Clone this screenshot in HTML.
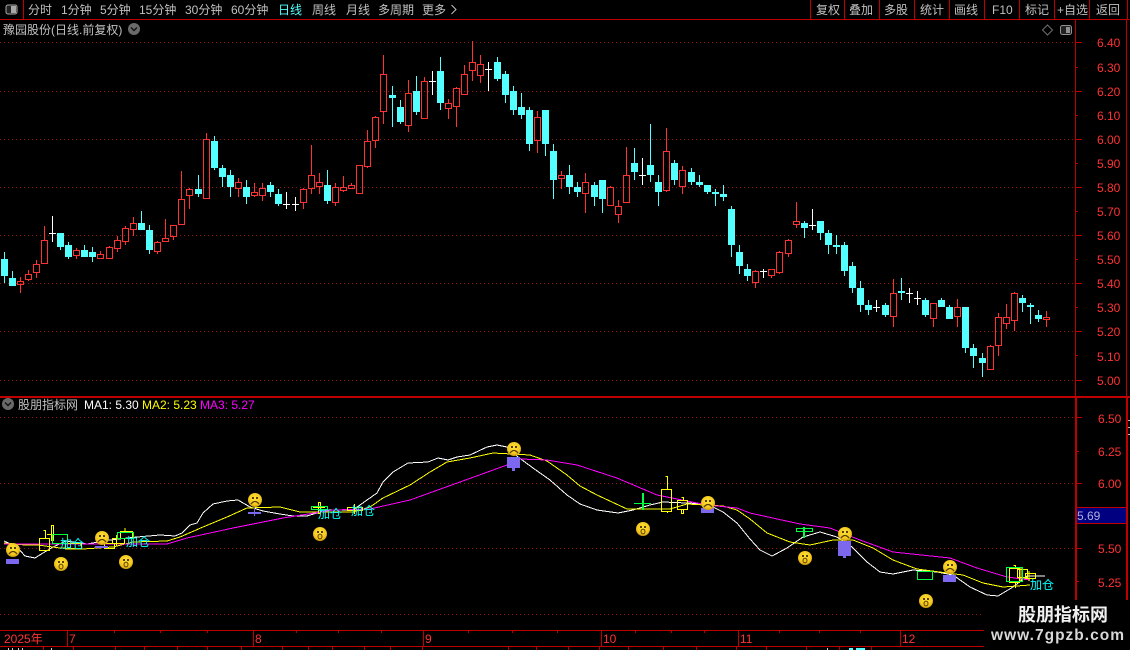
<!DOCTYPE html>
<html><head><meta charset="utf-8"><style>
html,body{margin:0;padding:0;background:#000;width:1130px;height:650px;overflow:hidden}
svg{display:block}
text{font-family:"Liberation Sans","WenQuanYi Zen Hei","Noto Sans CJK SC",sans-serif;font-size:12px}
.g{fill:#c0c0c0}.r{fill:#ff3232}.c{fill:#00ffff;font-size:12px}
</style></head><body>
<svg width="1130" height="650" viewBox="0 0 1130 650" xmlns="http://www.w3.org/2000/svg">
<defs>
<radialGradient id="y" cx="50%" cy="40%" r="60%"><stop offset="0" stop-color="#ffe53a"/><stop offset=".7" stop-color="#f5c81e"/><stop offset="1" stop-color="#c99a10"/></radialGradient>
<g id="fr"><circle r="7" fill="url(#y)"/><rect x="-3" y="-3" width="2" height="2" fill="#5a3d00"/><rect x="1" y="-3" width="2" height="2" fill="#5a3d00"/><path d="M-4 4Q0 -1 4 4" fill="none" stroke="#5a3d00" stroke-width="1.2"/></g>
<g id="su"><circle r="7" fill="url(#y)"/><rect x="-3" y="-3" width="2" height="2" fill="#5a3d00"/><rect x="1" y="-3" width="2" height="2" fill="#5a3d00"/><ellipse cy="2.5" rx="2" ry="2.4" fill="#f5c81e" stroke="#5a3d00"/></g>
</defs>
<rect width="1130" height="650" fill="#000"/>

<!-- grid -->
<path shape-rendering="crispEdges" stroke="#8f1010" stroke-dasharray="1 3" fill="none" d="M0 42.5H1075M0 91.5H1075M0 139.5H1075M0 187.5H1075M0 235.5H1075M0 283.5H1075M0 331.5H1075M0 380.5H1075M0 417.5H1075M0 483.5H1075M0 548.5H1075M0 614.5H984"/>

<!-- frame -->
<g shape-rendering="crispEdges" fill="#c00000">
<rect x="0" y="19" width="1130" height="1"/>
<rect x="23" y="0" width="1" height="19"/>
<rect x="810" y="0" width="1" height="19"/><rect x="844" y="0" width="1" height="19"/><rect x="879" y="0" width="1" height="19"/><rect x="914" y="0" width="1" height="19"/><rect x="949" y="0" width="1" height="19"/><rect x="984" y="0" width="1" height="19"/><rect x="1019" y="0" width="1" height="19"/><rect x="1054" y="0" width="1" height="19"/><rect x="1089" y="0" width="1" height="19"/>
<rect x="1127" y="0" width="1" height="19"/>
<rect x="1075" y="20" width="1" height="376"/>
<rect x="1126" y="20" width="1" height="376"/>
<rect x="0" y="396" width="1130" height="2"/>
<rect x="1075" y="398" width="2" height="202"/>
<rect x="1126" y="398" width="2" height="202"/>
<rect x="1077" y="507" width="49" height="1"/><rect x="1077" y="523" width="49" height="1"/>
<rect x="0" y="630" width="984" height="1"/>
<rect x="0" y="646" width="984" height="1"/>
<rect x="67" y="631" width="1" height="15"/><rect x="253" y="631" width="1" height="15"/><rect x="423" y="631" width="1" height="15"/><rect x="601" y="631" width="1" height="15"/><rect x="738" y="631" width="1" height="15"/><rect x="900" y="631" width="1" height="15"/>
</g>
<path shape-rendering="crispEdges" stroke="#c00000" fill="none" d="M1076 42.5H1082M1076 91.5H1082M1076 139.5H1082M1076 187.5H1082M1076 235.5H1082M1076 283.5H1082M1076 331.5H1082M1076 380.5H1082M1076 67.5H1078M1076 115.5H1078M1076 163.5H1078M1076 211.5H1078M1076 259.5H1078M1076 307.5H1078M1076 355.5H1078M1077 417.5H1082M1077 483.5H1082M1077 548.5H1082M1077 451.5H1079M1077 516.5H1079M1077 581.5H1079
M114.5 631V633M160.5 631V633M207.5 631V633M296.5 631V633M338.5 631V633M381.5 631V633M468.5 631V633M512.5 631V633M557.5 631V633M635.5 631V633M671.5 631V633M704.5 631V633M779.5 631V633M819.5 631V633M860.5 631V633M43.5 647V650M73.5 647V650M115.5 647V650M144.5 647V650M177.5 647V650M207.5 647V650M241.5 647V650M282.5 647V650M308.5 647V650M332.5 647V650M364.5 647V650M390.5 647V650M422.5 647V650M508.5 647V650M536.5 647V650M568.5 647V650M599.5 647V650M628.5 647V650M663.5 647V650M696.5 647V650M736.5 647V650M766.5 647V650M806.5 647V650M839.5 647V650M871.5 647V650"/>
<path shape-rendering="crispEdges" stroke="#c0c0c0" fill="none" d="M1128 420.5H1130M1128 427.5H1130M1128 434.5H1130"/>
<rect x="1077" y="508" width="49" height="15" fill="#000080"/>

<!-- top bar -->
<rect x="6" y="5" width="11" height="9" rx="2" fill="#222" stroke="#a8a8a8"/><rect x="11" y="6" width="5" height="7" fill="#a8a8a8"/>
<text x="28" y="14" class="g">分时</text><text x="61" y="14" class="g">1分钟</text><text x="100" y="14" class="g">5分钟</text><text x="139" y="14" class="g">15分钟</text><text x="185" y="14" class="g">30分钟</text><text x="231" y="14" class="g">60分钟</text>
<text x="278" y="14" fill="#54ffff">日线</text>
<text x="312" y="14" class="g">周线</text><text x="346" y="14" class="g">月线</text><text x="378" y="14" class="g">多周期</text><text x="422" y="14" class="g">更多</text>
<path d="M451.5 5L456 9.5L451.5 14" fill="none" stroke="#c0c0c0"/>
<text x="816" y="14" class="g">复权</text><text x="849" y="14" class="g">叠加</text><text x="884" y="14" class="g">多股</text><text x="920" y="14" class="g">统计</text><text x="954" y="14" class="g">画线</text><text x="992" y="14" class="g">F10</text><text x="1025" y="14" class="g">标记</text><text x="1057" y="14" class="g">+自选</text><text x="1096" y="14" class="g">返回</text>

<!-- title row -->
<text x="3" y="34" class="g">豫园股份(日线.前复权)</text>
<circle cx="134" cy="29" r="6" fill="#6a6a6a"/><path d="M131 27.5L134 30.5L137 27.5" fill="none" stroke="#111" stroke-width="1.4"/>
<path d="M1047.5 25L1052.5 30L1047.5 35L1042.5 30Z" fill="none" stroke="#707070"/>
<rect x="1060.5" y="25.5" width="11" height="9" rx="2" fill="#222" stroke="#909090"/><rect x="1066" y="27" width="4" height="6" fill="#909090"/>

<!-- price labels -->
<text x="1097" y="47" class="r">6.40</text><text x="1097" y="72" class="r">6.30</text><text x="1097" y="96" class="r">6.20</text><text x="1097" y="120" class="r">6.10</text><text x="1097" y="144" class="r">6.00</text><text x="1097" y="168" class="r">5.90</text><text x="1097" y="192" class="r">5.80</text><text x="1097" y="216" class="r">5.70</text><text x="1097" y="240" class="r">5.60</text><text x="1097" y="264" class="r">5.50</text><text x="1097" y="288" class="r">5.40</text><text x="1097" y="312" class="r">5.30</text><text x="1097" y="336" class="r">5.20</text><text x="1097" y="361" class="r">5.10</text><text x="1097" y="385" class="r">5.00</text>
<text x="1098" y="423" class="r">6.50</text><text x="1098" y="456" class="r">6.25</text><text x="1098" y="488" class="r">6.00</text><text x="1098" y="553" class="r">5.50</text><text x="1098" y="587" class="r">5.25</text>
<text x="1077" y="520" fill="#b0b0d8">5.69</text>

<!-- candles: cyan -->
<path shape-rendering="crispEdges" fill="none" stroke="#54ffff" d="M4.5 252V283M12.5 271V286M60.5 233V250M68.5 242V259M84.5 245V257M92.5 247V262M141.5 211V230M149.5 225V254M198.5 175V197M214.5 136V170M222.5 165V187M230.5 170V197M246.5 180V204M270.5 182V197M278.5 189V206M327.5 170V204M392.5 86V127M400.5 100V124M416.5 76V115M440.5 57V110M497.5 57V81M505.5 71V103M513.5 86V115M521.5 93V119M529.5 107V151M545.5 110V156M553.5 144V199M569.5 165V194M577.5 182V197M594.5 182V206M602.5 180V213M634.5 148V180M650.5 124V182M658.5 175V206M674.5 160V185M691.5 168V185M699.5 175V187M707.5 185V194M715.5 189V206M723.5 185V201M731.5 206V257M739.5 245V274M747.5 264V281M804.5 221V238M820.5 221V240M828.5 230V254M836.5 235V254M844.5 242V276M852.5 262V293M860.5 281V312M868.5 300V315M885.5 303V317M901.5 278V300M925.5 298V317M941.5 298V307M949.5 305V319M965.5 307V353M973.5 344V368M982.5 353V377M1022.5 295V312M1030.5 303V324M1038.5 310V322"/>
<path shape-rendering="crispEdges" fill="#54ffff" d="M1 259h7V276h-7zM9 278h7V286h-7zM57 233h7V247h-7zM65 245h7V257h-7zM81 250h7V257h-7zM89 252h7V257h-7zM138 223h7V230h-7zM146 230h7V250h-7zM195 189h7V194h-7zM211 141h7V168h-7zM219 168h7V177h-7zM227 175h7V187h-7zM243 187h7V197h-7zM267 185h7V192h-7zM275 194h7V204h-7zM324 185h7V201h-7zM389 95h7V98h-7zM397 107h7V122h-7zM413 91h7V112h-7zM437 71h7V103h-7zM494 62h7V79h-7zM502 74h7V95h-7zM510 91h7V110h-7zM518 107h7V115h-7zM526 110h7V144h-7zM542 110h7V144h-7zM550 151h7V180h-7zM566 175h7V187h-7zM574 187h7V192h-7zM591 185h7V197h-7zM599 180h7V199h-7zM631 163h7V172h-7zM647 165h7V175h-7zM655 182h7V192h-7zM671 163h7V180h-7zM688 172h7V182h-7zM696 182h7V185h-7zM704 185h7V192h-7zM712 192h7V194h-7zM720 194h7V197h-7zM728 209h7V245h-7zM736 252h7V266h-7zM744 269h7V276h-7zM801 223h7V228h-7zM817 221h7V233h-7zM825 233h7V245h-7zM833 245h7V247h-7zM841 245h7V271h-7zM849 266h7V288h-7zM857 288h7V305h-7zM865 305h7V310h-7zM882 305h7V315h-7zM898 291h7V293h-7zM922 300h7V315h-7zM938 300h7V307h-7zM946 307h7V319h-7zM962 307h7V348h-7zM970 348h7V356h-7zM979 358h7V363h-7zM1019 298h7V303h-7zM1027 305h7V307h-7zM1035 315h7V319h-7z"/>
<!-- candles: white -->
<path shape-rendering="crispEdges" fill="none" stroke="#fff" d="M52.5 216V242M49 233.5H56M286.5 192V209M283 204.5H290M295.5 197V211M292 204.5H299M432.5 71V95M429 81.5H436M488.5 62V91M485 69.5H492M642.5 158V185M639 175.5H646M763.5 269V278M760 271.5H767M812.5 209V230M809 225.5H816M876.5 300V312M873 307.5H880M909.5 288V303M906 293.5H913M917.5 291V305M914 298.5H921"/>
<!-- candles: red -->
<path shape-rendering="crispEdges" fill="none" stroke="#ff3232" d="M20.5 277V281M20.5 284V293M17.5 281.5h6V284.5h-6z
M28.5 270V274M28.5 279V281M25.5 274.5h6V279.5h-6z
M36.5 260V264M36.5 272V278M33.5 264.5h6V272.5h-6z
M44.5 226V240M41.5 240.5h6V263.5h-6z
M76.5 248V250M76.5 255V259M73.5 250.5h6V255.5h-6z
M100.5 251V254M100.5 258V259M97.5 254.5h6V258.5h-6z
M109.5 246V247M106.5 247.5h6V258.5h-6z
M117.5 236V240M117.5 248V252M114.5 240.5h6V248.5h-6z
M125.5 226V228M125.5 241V245M122.5 228.5h6V241.5h-6z
M133.5 217V223M133.5 229V236M130.5 223.5h6V229.5h-6z
M157.5 241V242M157.5 251V254M154.5 242.5h6V251.5h-6z
M165.5 219V238M165.5 241V242M162.5 238.5h6V241.5h-6z
M173.5 236V240M170.5 225.5h6V236.5h-6z
M181.5 171V199M181.5 224V225M178.5 199.5h6V224.5h-6z
M189.5 188V189M189.5 195V209M186.5 189.5h6V195.5h-6z
M206.5 133V139M203.5 139.5h6V198.5h-6z
M238.5 178V182M238.5 188V197M235.5 182.5h6V188.5h-6z
M254.5 183V192M254.5 195V197M251.5 192.5h6V195.5h-6z
M262.5 183V188M262.5 195V201M259.5 188.5h6V195.5h-6z
M303.5 188V189M303.5 202V209M300.5 189.5h6V202.5h-6z
M311.5 145V175M311.5 188V194M308.5 175.5h6V188.5h-6z
M319.5 173V182M319.5 186V194M316.5 182.5h6V186.5h-6z
M335.5 183V187M335.5 202V206M332.5 187.5h6V202.5h-6z
M343.5 176V187M343.5 190V192M340.5 187.5h6V190.5h-6z
M351.5 183V185M351.5 188V189M348.5 185.5h6V188.5h-6z
M356.5 165.5h6V193.5h-6z
M367.5 130V141M367.5 166V168M364.5 141.5h6V166.5h-6z
M375.5 116V117M375.5 140V148M372.5 117.5h6V140.5h-6z
M383.5 55V74M383.5 111V124M380.5 74.5h6V111.5h-6z
M408.5 80V93M408.5 125V132M405.5 93.5h6V125.5h-6z
M424.5 77V81M424.5 118V119M421.5 81.5h6V118.5h-6z
M448.5 99V103M448.5 108V119M445.5 103.5h6V108.5h-6z
M456.5 87V88M456.5 106V127M453.5 88.5h6V106.5h-6z
M464.5 65V74M461.5 74.5h6V94.5h-6z
M472.5 41V62M472.5 70V81M469.5 62.5h6V70.5h-6z
M480.5 55V64M480.5 75V83M477.5 64.5h6V75.5h-6z
M537.5 111V117M537.5 140V153M534.5 117.5h6V140.5h-6z
M561.5 171V175M561.5 178V189M558.5 175.5h6V178.5h-6z
M585.5 173V182M585.5 193V213M582.5 182.5h6V193.5h-6z
M610.5 186V187M607.5 187.5h6V205.5h-6z
M618.5 200V206M618.5 214V223M615.5 206.5h6V214.5h-6z
M626.5 147V175M623.5 175.5h6V202.5h-6z
M666.5 128V151M666.5 190V192M663.5 151.5h6V190.5h-6z
M682.5 166V170M682.5 186V194M679.5 170.5h6V186.5h-6z
M755.5 270V271M755.5 282V288M752.5 271.5h6V282.5h-6z
M771.5 275V278M768.5 269.5h6V275.5h-6z
M779.5 251V252M779.5 272V274M776.5 252.5h6V272.5h-6z
M788.5 239V240M788.5 253V257M785.5 240.5h6V253.5h-6z
M796.5 202V221M796.5 224V228M793.5 221.5h6V224.5h-6z
M893.5 279V293M893.5 316V327M890.5 293.5h6V316.5h-6z
M933.5 318V327M930.5 303.5h6V318.5h-6z
M957.5 299V307M957.5 316V327M954.5 307.5h6V316.5h-6z
M990.5 345V346M987.5 346.5h6V369.5h-6z
M998.5 313V317M998.5 345V356M995.5 317.5h6V345.5h-6z
M1006.5 304V317M1006.5 323V329M1003.5 317.5h6V323.5h-6z
M1014.5 292V293M1014.5 320V331M1011.5 293.5h6V320.5h-6z
M1046.5 311V317M1046.5 319V327M1043.5 317.5h6V319.5h-6z"/>

<!-- lower header -->
<circle cx="8" cy="404" r="6" fill="#6a6a6a"/><path d="M5 402.5L8 405.5L11 402.5" fill="none" stroke="#111" stroke-width="1.4"/>
<text x="18" y="409" class="g">股朋指标网</text>
<text x="84" y="409" fill="#fff">MA1: 5.30</text>
<text x="142" y="409" fill="#ffff00">MA2: 5.23</text>
<text x="200" y="409" fill="#ff00ff">MA3: 5.27</text>

<!-- MA lines -->
<g fill="none" stroke-width="1" shape-rendering="crispEdges">
<polyline stroke="#fff" points="4,541 17,547 25,556 35,558 43,553 53,547 66,541 87,544 110,540 137,537 160,535 175,536 182,533 190,525 197,523 203,513 213,504 227,501 238,500 250,507 263,511 280,514 293,516 307,516 327,510 353,510 367,500 377,493 383,482 393,472 408,463 428,462 438,458 448,460 457,457 470,455 487,447 497,445 507,447 518,457 533,468 550,480 567,495 580,504 597,510 618,513 633,510 650,505 663,502 687,503 707,504 723,512 737,523 750,539 760,550 772,556 787,548 803,537 820,532 837,537 852,547 867,562 880,572 893,574 913,570 937,572 953,575 970,587 987,595 998,596 1013,587 1027,576 1045,576"/>
<polyline stroke="#ffff00" points="4,543 25,545 38,545 60,548 83,549 113,547 133,542 167,541 180,537 203,527 227,517 247,508 280,507 300,512 353,512 370,507 383,498 410,485 430,472 447,462 470,458 493,453 530,455 547,461 567,475 580,486 597,495 627,509 670,509 687,504 723,506 737,510 750,519 767,533 790,542 810,545 833,540 853,540 873,548 893,560 917,569 947,573 963,575 983,583 1003,587 1030,585"/>
<polyline stroke="#ff00ff" points="4,544 60,544 167,544 187,538 233,528 283,518 333,510 370,509 410,500 460,482 507,465 520,459 547,460 577,465 617,478 657,495 707,505 737,508 750,513 800,524 830,528 860,540 893,552 950,558 977,568 1007,577 1030,580"/>
</g>

<!-- indicator candles -->
<g shape-rendering="crispEdges" fill="none">
<path stroke="#ffff00" d="M39.5 538.5h10V550.5h-10zM43.5 530.5h2V538M51.5 525.5h2V540.5h-2zM47 534.5H66M65.5 543.5h16V549h-16zM104.5 543.5h10V548.5h-10zM112.5 538.5h12V543.5h-12zM116.5 535V546M120.5 531.5h12V538.5h-12zM125 528V531M318.5 502.5h2V513.5h-2zM313 507.5H325M347.5 507.5h15V510.5h-15zM354.5 504V514M661.5 489.5h10V511.5h-10zM665.5 476.5h2V489M665.5 511.5h2V513M677.5 500.5h10V509.5h-10zM681.5 497.5h2V500M681.5 509.5h2V513.5h-2zM1009.5 568.5h10V582.5h-10zM1013.5 565.5h2V568M1013.5 582.5h2V588M1017.5 569.5h10V577.5h-10zM1021 568V582M1025.5 573.5h10V578.5h-10zM1029 571V581"/>
<path stroke="#00ff40" d="M52.5 534.5h15V543.5h-15zM117.5 532.5h16V538.5h-16zM311.5 506.5h16V509.5h-16zM642.5 493.5h1V509.5h-1zM634 503.5H651M796.5 528.5h16V531.5h-16zM803.5 527.5h1V537.5h-1zM917.5 571.5h15V579.5h-15zM1006.5 567.5h16V581.5h-16z"/>
</g>
<text x="60" y="548" class="c">加仓</text><text x="126" y="546" class="c">加仓</text><text x="318" y="518" class="c">加仓</text><text x="351" y="515" class="c">加仓</text><text x="1030" y="589" class="c">加仓</text>

<!-- purple boxes -->
<g fill="#7b68ee" shape-rendering="crispEdges">
<rect x="6" y="559" width="13" height="5"/>
<rect x="95" y="546" width="13" height="2"/>
<rect x="248" y="512" width="13" height="2"/><rect x="254" y="508" width="1" height="8"/>
<rect x="507" y="457" width="13" height="11"/><rect x="512" y="468" width="3" height="3"/>
<rect x="701" y="508" width="13" height="5"/>
<rect x="838" y="541" width="13" height="15"/><rect x="843" y="556" width="3" height="2"/>
<rect x="943" y="575" width="13" height="7"/>
</g>

<!-- emoji -->
<use href="#fr" x="13" y="550"/><use href="#fr" x="102" y="538"/><use href="#fr" x="255" y="500"/><use href="#fr" x="514" y="449"/><use href="#fr" x="708" y="503"/><use href="#fr" x="845" y="534"/><use href="#fr" x="950" y="567"/>
<use href="#su" x="61" y="564"/><use href="#su" x="126" y="562"/><use href="#su" x="320" y="534"/><use href="#su" x="643" y="529"/><use href="#su" x="805" y="558"/><use href="#su" x="926" y="601"/>

<!-- time axis -->
<text x="4" y="643" class="r">2025年</text>
<text x="69" y="643" class="r">7</text><text x="255" y="643" class="r">8</text><text x="425" y="643" class="r">9</text><text x="603" y="643" class="r">10</text><text x="740" y="643" class="r">11</text><text x="902" y="643" class="r">12</text>

<!-- bottom strip hints -->
<path shape-rendering="crispEdges" stroke="#d0d0d0" d="M8.5 648V650M12.5 648V650M18.5 648V650M22.5 648V650M51.5 648V650M827.5 648V650"/>
<rect x="849" y="648" width="4" height="2" fill="#54ffff"/><rect x="856" y="648" width="9" height="2" fill="#54ffff"/>

<!-- watermark -->
<rect x="984" y="600" width="146" height="50" fill="#000"/>
<text x="1018" y="621" fill="#f0f0f0" style="font-size:18px;font-weight:bold;font-family:'Noto Sans CJK SC','WenQuanYi Zen Hei',sans-serif">股朋指标网</text>
<text x="991" y="640" fill="#d8d8d8" textLength="133" style="font-size:15.5px;font-weight:bold">www.7gpzb.com</text>
</svg>
</body></html>
